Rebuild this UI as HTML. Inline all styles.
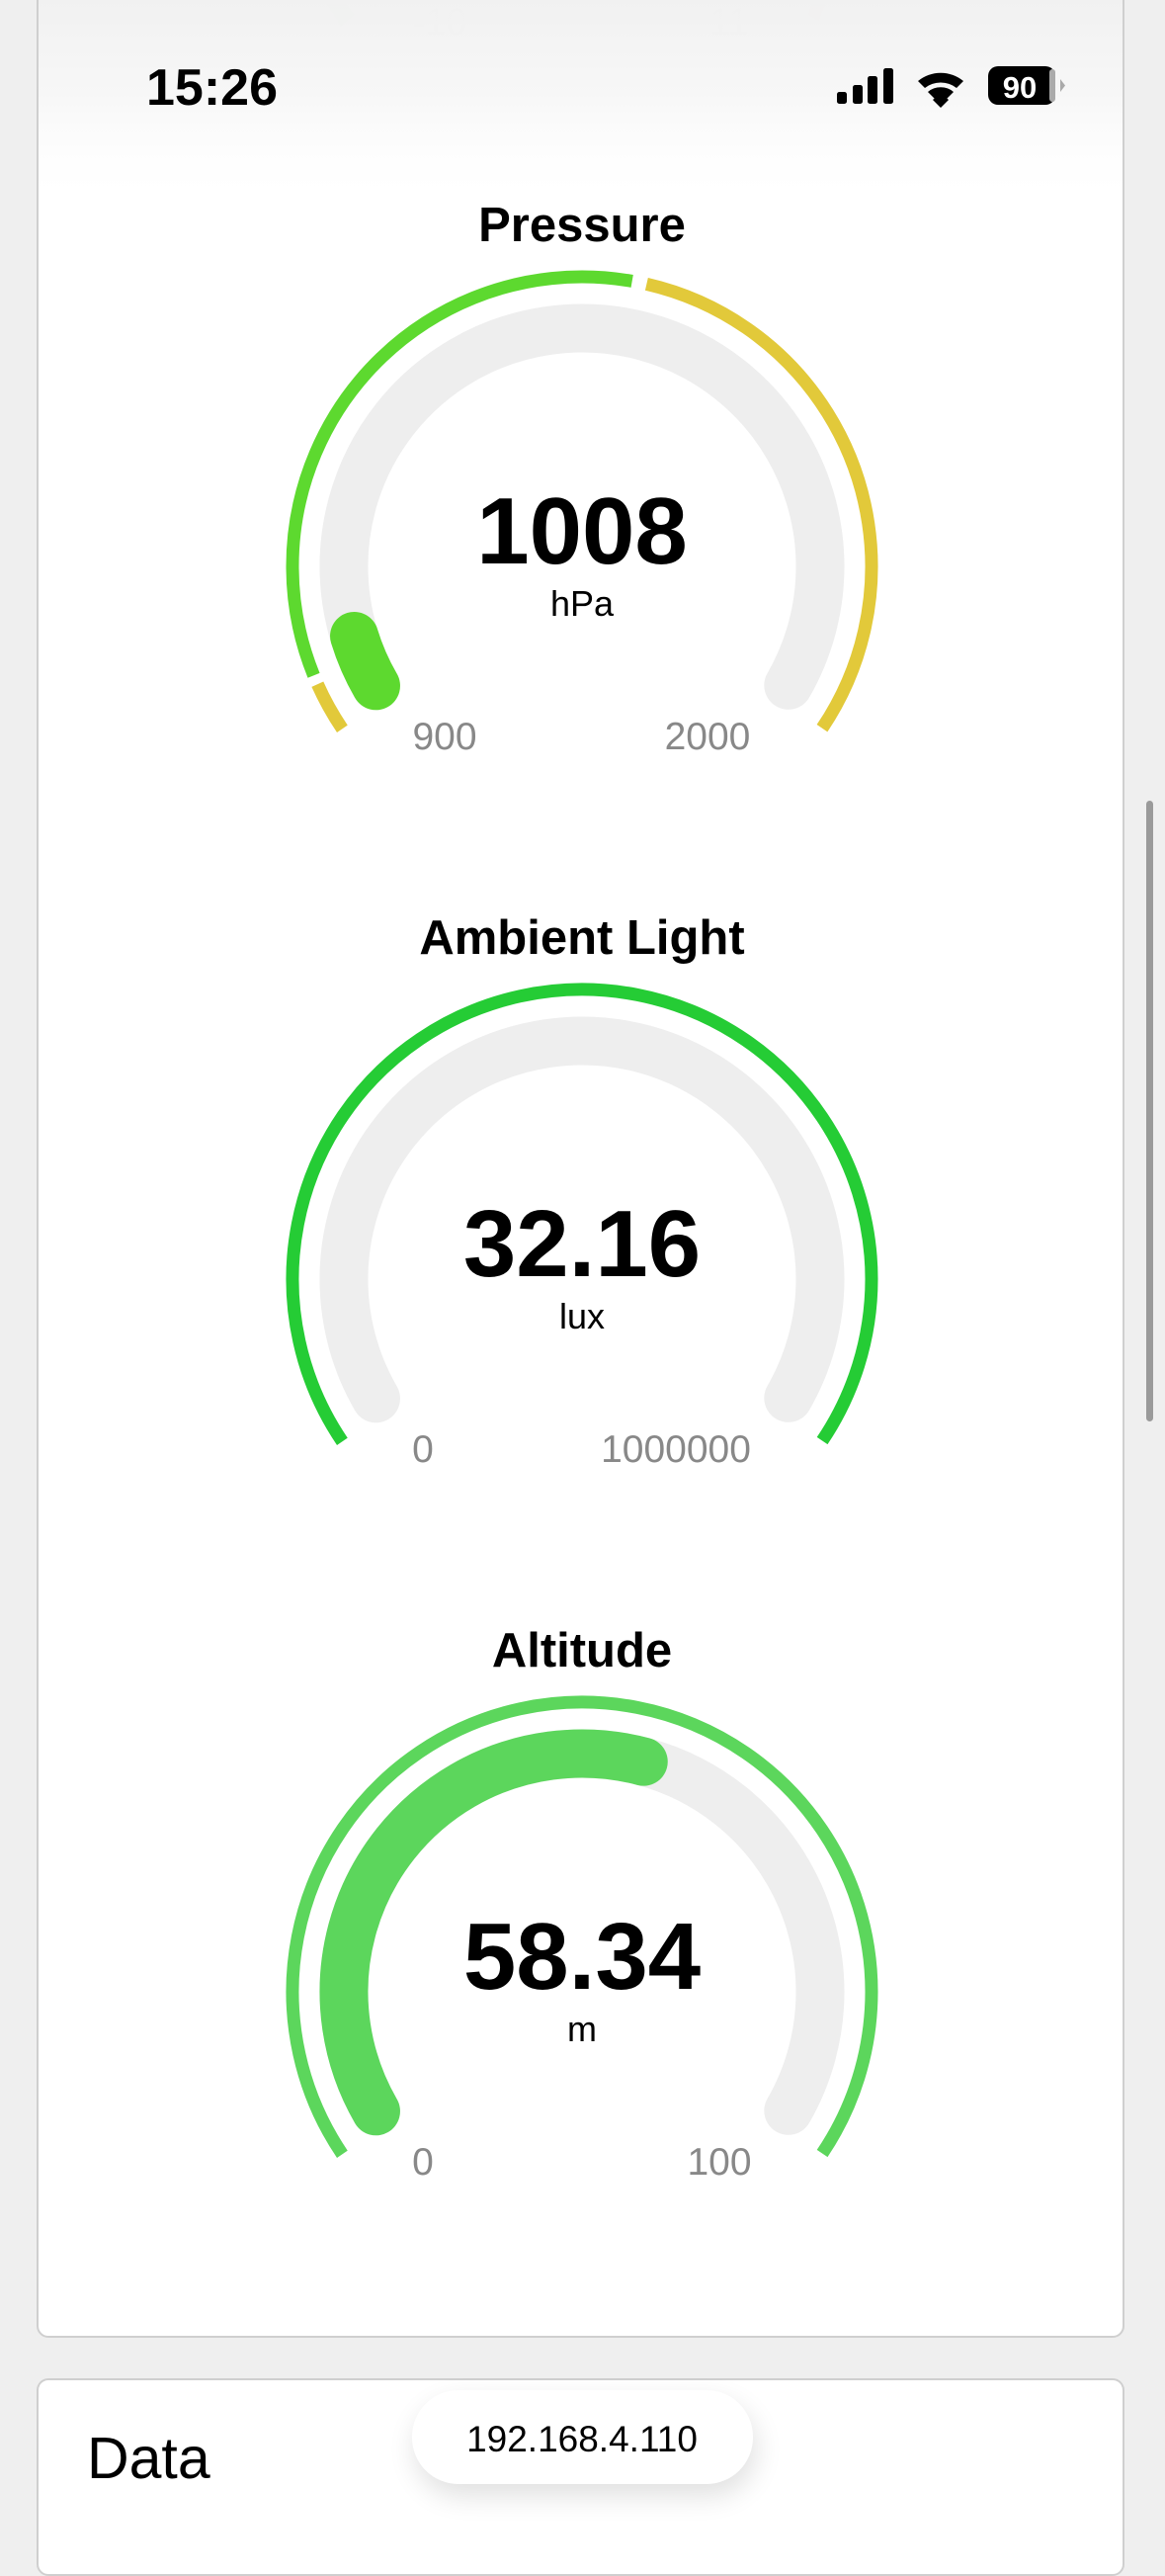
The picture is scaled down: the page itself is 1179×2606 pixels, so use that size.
<!DOCTYPE html>
<html><head><meta charset="utf-8">
<style>
html,body{margin:0;padding:0;background:#efefef;}
body{width:1179px;height:2556px;overflow:hidden;position:relative;font-family:"Liberation Sans",Arial,sans-serif;}
.card{position:absolute;left:37px;width:1101px;background:#fff;border:2px solid #cfcfcf;border-radius:12px;box-sizing:border-box;}
</style></head>
<body>
<div class="card" style="top:-20px;height:2385px;"></div>
<div class="card" style="top:2406px;height:200px;"></div>
<svg width="1179" height="2556" style="position:absolute;left:0;top:0" font-family="Liberation Sans, Arial, sans-serif">
<defs>
<linearGradient id="fade" x1="0" y1="0" x2="0" y2="1">
<stop offset="0" stop-color="#f1f1f1" stop-opacity="1"/>
<stop offset="0.45" stop-color="#f6f6f6" stop-opacity="0.9"/>
<stop offset="1" stop-color="#ffffff" stop-opacity="0"/>
</linearGradient>
<filter id="sh" x="-30%" y="-60%" width="160%" height="220%"><feGaussianBlur stdDeviation="14"/></filter>
</defs>

<!-- faded top remnants -->
<text x="445" y="35" font-size="38" fill="#d6d6d6" text-anchor="middle">-10</text>
<text x="738" y="35" font-size="38" fill="#d6d6d6" text-anchor="middle">11</text>
<path d="M328 0 L345 27 L359 15 L346 0Z" fill="#c5ebc8"/>
<path d="M822 0 L836 0 L829 22 L818 15Z" fill="#f2c6c6"/>

<!-- ===== Pressure (cy=573) ===== -->
<g>
<text x="589" y="244" font-size="49" font-weight="bold" text-anchor="middle" fill="#000">Pressure</text>
<circle cx="589" cy="573" r="293" fill="none" stroke="#e2c93a" stroke-width="13" pathLength="360" stroke-dasharray="10 350" transform="rotate(-214 589 573)"/>
<circle cx="589" cy="573" r="293" fill="none" stroke="#5dd92f" stroke-width="13" pathLength="360" stroke-dasharray="122 238" transform="rotate(-202 589 573)"/>
<circle cx="589" cy="573" r="293" fill="none" stroke="#e2c93a" stroke-width="13" pathLength="360" stroke-dasharray="111 249" transform="rotate(-77 589 573)"/>
<circle cx="589" cy="573" r="241" fill="none" stroke="#eeeeee" stroke-width="49" stroke-linecap="round" pathLength="360" stroke-dasharray="240 120" transform="rotate(-210 589 573)"/>
<circle cx="589" cy="573" r="241" fill="none" stroke="#5dd92f" stroke-width="49" stroke-linecap="round" pathLength="360" stroke-dasharray="13 347" transform="rotate(-210 589 573)"/>
<text x="589" y="570" font-size="96" font-weight="bold" text-anchor="middle" fill="#000">1008</text>
<text x="589" y="623" font-size="36" text-anchor="middle" fill="#000">hPa</text>
<text x="450" y="758" font-size="39" text-anchor="middle" fill="#888">900</text>
<text x="716" y="758" font-size="39" text-anchor="middle" fill="#888">2000</text>
</g>

<!-- ===== Ambient Light (cy=1294) ===== -->
<g>
<text x="589" y="965" font-size="49" font-weight="bold" text-anchor="middle" fill="#000">Ambient Light</text>
<circle cx="589" cy="1294" r="293" fill="none" stroke="#25cc35" stroke-width="13" pathLength="360" stroke-dasharray="248 112" transform="rotate(-214 589 1294)"/>
<circle cx="589" cy="1294" r="241" fill="none" stroke="#eeeeee" stroke-width="49" stroke-linecap="round" pathLength="360" stroke-dasharray="240 120" transform="rotate(-210 589 1294)"/>
<text x="589" y="1291" font-size="96" font-weight="bold" text-anchor="middle" fill="#000">32.16</text>
<text x="589" y="1344" font-size="36" text-anchor="middle" fill="#000">lux</text>
<text x="428" y="1479" font-size="39" text-anchor="middle" fill="#888">0</text>
<text x="684" y="1479" font-size="39" text-anchor="middle" fill="#888">1000000</text>
</g>

<!-- ===== Altitude (cy=2015) ===== -->
<g>
<text x="589" y="1686" font-size="49" font-weight="bold" text-anchor="middle" fill="#000">Altitude</text>
<circle cx="589" cy="2015" r="293" fill="none" stroke="#5cd65c" stroke-width="13" pathLength="360" stroke-dasharray="248 112" transform="rotate(-214 589 2015)"/>
<circle cx="589" cy="2015" r="241" fill="none" stroke="#eeeeee" stroke-width="49" stroke-linecap="round" pathLength="360" stroke-dasharray="240 120" transform="rotate(-210 589 2015)"/>
<circle cx="589" cy="2015" r="241" fill="none" stroke="#5cd65c" stroke-width="49" stroke-linecap="round" pathLength="360" stroke-dasharray="135 225" transform="rotate(-210 589 2015)"/>
<text x="589" y="2012" font-size="96" font-weight="bold" text-anchor="middle" fill="#000">58.34</text>
<text x="589" y="2065" font-size="36" text-anchor="middle" fill="#000">m</text>
<text x="428" y="2200" font-size="39" text-anchor="middle" fill="#888">0</text>
<text x="728" y="2200" font-size="39" text-anchor="middle" fill="#888">100</text>
</g>

<!-- Data card -->
<text x="88" y="2507" font-size="59" fill="#000">Data</text>
<rect x="420" y="2430" width="345" height="95" rx="47" fill="#000" opacity="0.12" filter="url(#sh)"/>
<rect x="417" y="2418" width="345" height="95" rx="47" fill="#fff"/>
<text x="589" y="2480" font-size="37" text-anchor="middle" fill="#000">192.168.4.110</text>

<!-- top fade overlay (card interior only) -->
<rect x="39" y="0" width="1097" height="210" fill="url(#fade)"/>

<!-- status bar -->
<text x="148" y="106" font-size="52" font-weight="bold" fill="#000">15:26</text>
<rect x="847" y="93" width="10" height="12" rx="2.5" fill="#000"/>
<rect x="863" y="86" width="10" height="19" rx="2.5" fill="#000"/>
<rect x="878" y="77" width="10" height="28" rx="2.5" fill="#000"/>
<rect x="894" y="69" width="10" height="36" rx="2.5" fill="#000"/>
<g fill="#000">
<path d="M929 82 A36 36 0 0 1 975 82 L968 89 A26 26 0 0 0 936 89 Z"/>
<path d="M939 93 A20 20 0 0 1 965 93 L958 100 A11 11 0 0 0 946 100 Z"/>
<path d="M944 101 L952 94 L960 101 L952 109 Z"/>
</g>
<rect x="1000" y="67" width="68" height="39" rx="10" fill="#000"/>
<rect x="1062" y="70" width="6" height="33" rx="3" fill="#aaa"/>
<path d="M1073 80 L1078 86.5 L1073 93Z" fill="#aaa"/>
<text x="1032" y="99" font-size="31" font-weight="bold" fill="#fff" text-anchor="middle">90</text>

<!-- scrollbar -->
<rect x="1160" y="810" width="7" height="628" rx="3.5" fill="#9a9a9a"/>
</svg>
</body></html>
